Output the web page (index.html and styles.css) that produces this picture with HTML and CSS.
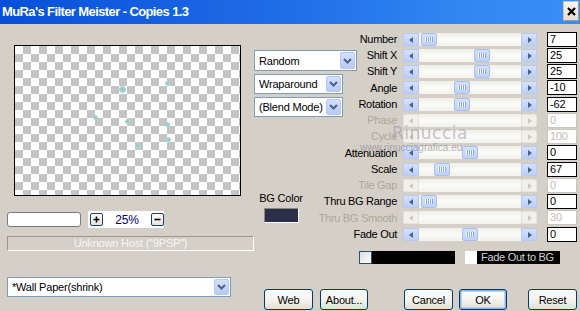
FILE: index.html
```html
<!DOCTYPE html>
<html lang="en">
<head>
    <meta charset="UTF-8">
    <title>MuRa's Filter Meister - Copies 1.3</title>
    <link rel="stylesheet" href="styles.css">
</head>
<body>
<div class="window">
    <div class="titlebar">
        <span class="title">MuRa's Filter Meister - Copies 1.3</span>
        <span class="close-btn">
            <svg width="9" height="9" viewBox="0 0 9 9"><path d="M1 1L8 8M8 1L1 8" stroke="#000" stroke-width="2.2"/></svg>
        </span>
    </div>

    <div class="content">
        <!-- left: preview + host info -->
        <div class="left">
            <div class="preview">
                <span class="dot big" style="left:104px;top:40px"></span>
                <span class="dot" style="left:150px;top:35px"></span>
                <span class="dot" style="left:78px;top:69px"></span>
                <span class="dot" style="left:110px;top:73px"></span>
                <span class="dot" style="left:150px;top:76px"></span>
                <span class="dot" style="left:151px;top:91px"></span>
                <span class="dot" style="left:120px;top:97px"></span>
            </div>
            <div class="zoom-row">
                <div class="textbox"></div>
                <div class="zoom-panel">
                    <span class="mini-btn">
                        <svg width="11" height="11" viewBox="0 0 11 11"><path d="M2.5 5.5h6M5.5 2.5v6" stroke="#000" stroke-width="1.6"/></svg>
                    </span>
                    <span class="zoom-value">25%</span>
                    <span class="mini-btn">
                        <svg width="11" height="11" viewBox="0 0 11 11"><path d="M2.5 5.5h6" stroke="#000" stroke-width="1.6"/></svg>
                    </span>
                </div>
            </div>
            <div class="status">Unknown Host ("9PSP")</div>
            <div class="combo combo-wall">
                <span class="combo-text">*Wall Paper(shrink)</span>
                <span class="combo-arrow"><svg width="9" height="6" viewBox="0 0 9 6"><path d="M1 1l3.5 3.5L8 1" fill="none" stroke="#4d6185" stroke-width="2"/></svg></span>
            </div>
        </div>

        <div class="right">
            <div class="top">
                <!-- mode dropdowns + bg color -->
                <div class="middle">
                    <div class="combo combo-random">
                        <span class="combo-text">Random</span>
                        <span class="combo-arrow"><svg width="9" height="6" viewBox="0 0 9 6"><path d="M1 1l3.5 3.5L8 1" fill="none" stroke="#4d6185" stroke-width="2"/></svg></span>
                    </div>
                    <div class="combo combo-small">
                        <span class="combo-text">Wraparound</span>
                        <span class="combo-arrow"><svg width="9" height="6" viewBox="0 0 9 6"><path d="M1 1l3.5 3.5L8 1" fill="none" stroke="#4d6185" stroke-width="2"/></svg></span>
                    </div>
                    <div class="combo combo-small">
                        <span class="combo-text">(Blend Mode)</span>
                        <span class="combo-arrow"><svg width="9" height="6" viewBox="0 0 9 6"><path d="M1 1l3.5 3.5L8 1" fill="none" stroke="#4d6185" stroke-width="2"/></svg></span>
                    </div>
                    <div class="bgcolor">
                        <span class="bgcolor-label">BG Color</span>
                        <span class="swatch"></span>
                    </div>
                </div>

                <!-- sliders -->
                <div class="sliders">
                    <div class="row">
                        <span class="lbl">Number</span>
                        <div class="scroll"><span class="arrow arrow-left"></span><span class="track"><span class="thumb" style="left:2px"></span></span><span class="arrow arrow-right"></span></div>
                        <div class="val">7</div>
                    </div>
                    <div class="row">
                        <span class="lbl">Shift X</span>
                        <div class="scroll"><span class="arrow arrow-left"></span><span class="track"><span class="thumb" style="left:55px"></span></span><span class="arrow arrow-right"></span></div>
                        <div class="val">25</div>
                    </div>
                    <div class="row">
                        <span class="lbl">Shift Y</span>
                        <div class="scroll"><span class="arrow arrow-left"></span><span class="track"><span class="thumb" style="left:55px"></span></span><span class="arrow arrow-right"></span></div>
                        <div class="val">25</div>
                    </div>
                    <div class="row">
                        <span class="lbl">Angle</span>
                        <div class="scroll"><span class="arrow arrow-left"></span><span class="track"><span class="thumb" style="left:35px"></span></span><span class="arrow arrow-right"></span></div>
                        <div class="val">-10</div>
                    </div>
                    <div class="row">
                        <span class="lbl">Rotation</span>
                        <div class="scroll"><span class="arrow arrow-left"></span><span class="track"><span class="thumb" style="left:35px"></span></span><span class="arrow arrow-right"></span></div>
                        <div class="val">-62</div>
                    </div>
                    <div class="row disabled">
                        <span class="lbl">Phase</span>
                        <div class="scroll"><span class="arrow arrow-left"></span><span class="track"></span><span class="arrow arrow-right"></span></div>
                        <div class="val">0</div>
                    </div>
                    <div class="row disabled">
                        <span class="lbl">Cycle</span>
                        <div class="scroll"><span class="arrow arrow-left"></span><span class="track"></span><span class="arrow arrow-right"></span></div>
                        <div class="val">100</div>
                    </div>
                    <div class="row">
                        <span class="lbl">Attenuation</span>
                        <div class="scroll"><span class="arrow arrow-left"></span><span class="track"><span class="thumb" style="left:43px"></span></span><span class="arrow arrow-right"></span></div>
                        <div class="val">0</div>
                    </div>
                    <div class="row">
                        <span class="lbl">Scale</span>
                        <div class="scroll"><span class="arrow arrow-left"></span><span class="track"><span class="thumb" style="left:15px"></span></span><span class="arrow arrow-right"></span></div>
                        <div class="val">67</div>
                    </div>
                    <div class="row disabled">
                        <span class="lbl">Tile Gap</span>
                        <div class="scroll"><span class="arrow arrow-left"></span><span class="track"></span><span class="arrow arrow-right"></span></div>
                        <div class="val">0</div>
                    </div>
                    <div class="row">
                        <span class="lbl">Thru BG Range</span>
                        <div class="scroll"><span class="arrow arrow-left"></span><span class="track"><span class="thumb" style="left:2px"></span></span><span class="arrow arrow-right"></span></div>
                        <div class="val">0</div>
                    </div>
                    <div class="row disabled">
                        <span class="lbl">Thru BG Smooth</span>
                        <div class="scroll"><span class="arrow arrow-left"></span><span class="track"></span><span class="arrow arrow-right"></span></div>
                        <div class="val">30</div>
                    </div>
                    <div class="row">
                        <span class="lbl">Fade Out</span>
                        <div class="scroll"><span class="arrow arrow-left"></span><span class="track"><span class="thumb" style="left:43px"></span></span><span class="arrow arrow-right"></span></div>
                        <div class="val">0</div>
                    </div>

                    <div class="fade-row">
                        <div class="fade-bar"><span class="check"></span></div>
                        <span class="check-plain"></span>
                        <span class="fade-label">Fade Out to BG</span>
                    </div>
                </div>
            </div>

            <div class="buttons">
                <button class="btn btn-web">Web</button>
                <button class="btn btn-about">About...</button>
                <button class="btn btn-cancel">Cancel</button>
                <button class="btn btn-ok">OK</button>
                <button class="btn btn-reset">Reset</button>
            </div>
        </div>
    </div>

    <!-- watermark stamped over the screenshot -->
    <div class="watermark">
        <span class="wm-name">Rinuccia</span>
        <span class="wm-url">www.rinucciagrafica.eu</span>
    </div>
</div>
</body>
</html>
```

FILE: styles.css
```css
* {
    box-sizing: border-box;
}

body {
    margin: 0;
    font-family: "Liberation Sans", Arial, sans-serif;
    font-size: 11px;
    letter-spacing: -0.2px;
    color: #000;
    background-color: #d4d0c8;
}

.window {
    position: relative;
    width: 580px;
    height: 311px;
    overflow: hidden;
    background-color: #d4d0c8;
}

/* --- title bar --- */
.titlebar {
    height: 24px;
    display: flex;
    justify-content: space-between;
    align-items: flex-start;
    padding: 0 1px 0 2px;
    background: linear-gradient(to right, #0650d8, #1e6ae6 45%, #3287f2 80%, #3b8ef5);
}

.title {
    margin-top: 4px;
    color: #fff;
    font-weight: bold;
    font-size: 13px;
    letter-spacing: -0.6px;
    line-height: 15px;
}

.close-btn {
    margin-top: 1px;
    width: 16px;
    height: 20px;
    display: flex;
    justify-content: center;
    align-items: center;
    background: linear-gradient(#f6f4ec, #e4e0d2);
    border: 1px solid #c8c4b8;
    border-right-color: #a09c90;
    border-bottom-color: #a09c90;
}

.content {
    display: flex;
    height: 287px;
}

/* --- left column --- */
.left {
    width: 254px;
    padding-left: 7px;
}

.preview {
    position: relative;
    margin: 21px 0 0 7px;
    width: 227px;
    height: 151px;
    border: 1px solid #000;
    background: repeating-conic-gradient(#c4c4c4 0 25%, #fff 0 50%) 0 0 / 16px 16px;
}

.dot {
    position: absolute;
    width: 5px;
    height: 5px;
    border-radius: 50%;
    background: radial-gradient(circle, #8cc4c2 0, #a9d8d6 60%, rgba(180, 225, 222, 0.6) 100%);
}

.dot.big {
    width: 7px;
    height: 7px;
}

.zoom-row {
    display: flex;
    align-items: center;
    margin-top: 15px;
}

.textbox {
    width: 74px;
    height: 15px;
    background-color: #fff;
    border: 1px solid #7a7a7a;
    border-radius: 3px;
}

.zoom-panel {
    margin-left: 7px;
    width: 76px;
    height: 17px;
    display: flex;
    align-items: center;
    padding-left: 2px;
    background-color: #fff;
}

.mini-btn {
    width: 13px;
    height: 13px;
    display: flex;
    justify-content: center;
    align-items: center;
    border: 1px solid #1d3e6c;
    border-radius: 2px;
    background: linear-gradient(#fff, #e6e3d8);
}

.zoom-value {
    width: 48px;
    text-align: center;
    color: #000080;
    font-size: 12px;
}

.status {
    margin-top: 8px;
    width: 247px;
    height: 15px;
    border: 1px solid #fff;
    border-top-color: #9a978f;
    border-left-color: #9a978f;
    color: #f6f6f2;
    text-align: center;
    line-height: 13px;
}

/* --- XP combo boxes --- */
.combo {
    display: flex;
    align-items: center;
    justify-content: space-between;
    height: 20px;
    padding: 1px;
    border: 1px solid #7f9db9;
    background-color: #fff;
}

.combo-text {
    padding-left: 3px;
}

.combo-arrow {
    width: 15px;
    height: 100%;
    display: flex;
    justify-content: center;
    align-items: center;
    border: 1px solid #b4c7f2;
    border-radius: 2px;
    background: linear-gradient(#d3e0fd, #b7cbf7);
}

.combo-wall {
    margin-top: 26px;
    width: 224px;
}

/* --- right part --- */
.right {
    flex: 1;
}

.top {
    display: flex;
}

.middle {
    width: 104px;
    padding-top: 26px;
}

.combo-random {
    width: 103px;
    height: 21px;
}

.combo-small {
    margin-top: 3px;
    width: 89px;
}

.bgcolor {
    margin: 75px 0 0 7px;
    width: 40px;
    display: flex;
    flex-direction: column;
    align-items: center;
}

.bgcolor-label {
    white-space: nowrap;
    line-height: 13px;
}

.swatch {
    margin-top: 3px;
    width: 35px;
    height: 15px;
    background-color: #2b2f4a;
    border: 1px solid #fff;
    border-top-color: #8c8a84;
    border-left-color: #8c8a84;
}

/* --- sliders --- */
.sliders {
    padding-top: 7px;
}

.row {
    display: flex;
    align-items: center;
    height: 16px;
}

/* rows are 16.25px apart in the dialog */
.row:nth-child(4n) {
    height: 17px;
}

/* long labels run out to the left, as in the dialog */
.lbl {
    width: 39px;
    margin-right: 6px;
    display: flex;
    justify-content: flex-end;
    white-space: nowrap;
    letter-spacing: -0.3px;
}

.scroll {
    width: 134px;
    height: 13px;
    display: flex;
}

.arrow {
    position: relative;
    width: 16px;
    height: 13px;
    border: 1px solid #b6c9f4;
    border-radius: 2px;
    background: linear-gradient(#d4e1fe, #bccff8);
}

.arrow::before {
    content: "";
    position: absolute;
    top: 3px;
    left: 5px;
    border-top: 3px solid transparent;
    border-bottom: 3px solid transparent;
}

.arrow-left::before {
    border-right: 4px solid #4d6185;
}

.arrow-right::before {
    left: 6px;
    border-left: 4px solid #4d6185;
}

.track {
    position: relative;
    flex: 1;
    background: linear-gradient(#f0efe9, #fbfbf8 50%, #f2f1ec);
}

.thumb {
    position: absolute;
    top: 0;
    width: 16px;
    height: 13px;
    border: 1px solid #a9bff0;
    border-radius: 2px;
    background: linear-gradient(#d4e1fe, #bfd1f9);
}

.thumb::before {
    content: "";
    position: absolute;
    top: 3px;
    left: 3px;
    width: 8px;
    height: 5px;
    background: repeating-linear-gradient(90deg, #f2f6ff 0 1px, #8ea8e2 1px 2px);
}

.val {
    margin-left: 10px;
    width: 30px;
    height: 15px;
    padding-left: 2px;
    border: 1px solid #000;
    background-color: #fff;
    line-height: 13px;
}

.row.disabled .lbl {
    color: #aca899;
}

.row.disabled .arrow {
    border-color: #e6e4da;
    background: #f1f0ea;
}

.row.disabled .arrow-left::before {
    border-right-color: #cdcbc0;
}

.row.disabled .arrow-right::before {
    border-left-color: #cdcbc0;
}

.row.disabled .val {
    border-color: #c9c6bd;
    color: #c0bdb4;
}

.fade-row {
    display: flex;
    align-items: center;
    margin-top: 9px;
    height: 13px;
}

.fade-bar {
    margin-left: 1px;
    width: 96px;
    height: 13px;
    background-color: #000;
}

.check {
    display: block;
    width: 13px;
    height: 13px;
    border: 1px solid #1c5180;
    background: linear-gradient(135deg, #dcdbd5, #fff);
}

.check-plain {
    margin-left: 10px;
    width: 12px;
    height: 13px;
    background-color: #fff;
}

.fade-label {
    width: 83px;
    height: 13px;
    padding-left: 4px;
    background-color: #000;
    color: #d4d0c8;
    line-height: 13px;
    letter-spacing: -0.3px;
}

/* --- bottom buttons --- */
.buttons {
    display: flex;
    margin-top: 25px;
    padding-left: 10px;
}

.btn {
    height: 21px;
    padding: 0;
    font-family: inherit;
    font-size: 11px;
    letter-spacing: -0.2px;
    color: #000;
    border: 1px solid #003c74;
    border-radius: 3px;
    background: linear-gradient(#fff, #f2f0e8 60%, #e2ded3);
}

.btn-web {
    width: 49px;
}

.btn-about {
    width: 48px;
    margin-left: 7px;
}

.btn-cancel {
    width: 49px;
    margin-left: 36px;
}

.btn-ok {
    width: 48px;
    margin-left: 6px;
    box-shadow: inset 0 0 0 1px #8db2e3, inset 0 0 0 2px #b9d1f3;
}

.btn-reset {
    width: 49px;
    margin-left: 21px;
}

/* --- watermark --- */
.watermark {
    position: absolute;
    left: 360px;
    top: 124px;
    display: flex;
    flex-direction: column;
    align-items: flex-start;
    pointer-events: none;
}

.wm-name {
    margin-left: 32px;
    font-family: "DejaVu Sans", sans-serif;
    font-size: 17px;
    letter-spacing: 0.5px;
    color: rgba(150, 150, 165, 0.55);
    line-height: 18px;
}

.wm-url {
    font-size: 10px;
    letter-spacing: 0;
    color: rgba(110, 110, 125, 0.5);
    line-height: 11px;
}
```
